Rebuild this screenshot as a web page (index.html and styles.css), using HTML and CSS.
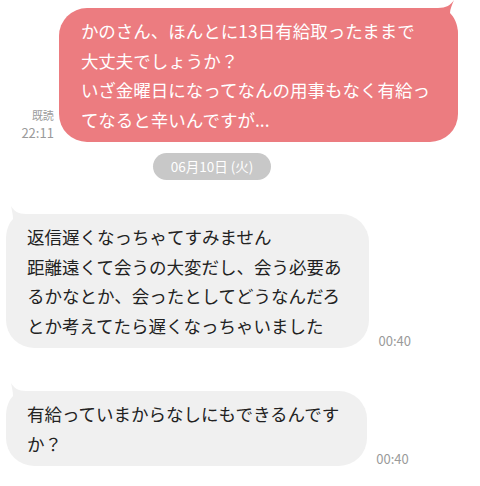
FILE: index.html
```html
<!DOCTYPE html>
<html lang="ja">
<head>
  <meta charset="UTF-8">
  <title>トーク</title>
  <meta name="viewport" content="width=device-width, initial-scale=1.0">
  <link rel="stylesheet" href="styles.css">
</head>
<body>

  <div class="talk">

    <div class="row sent">
      <div class="meta">
        <span>既読</span>
        <span>22:11</span>
      </div>
      <div class="bubble pink">
        <svg class="ear ear-right" width="30" height="40" viewBox="0 0 30 40">
          <path d="M0,8 L10,8 C18,8 23,5 26,0 C24,5 22,9 22,13 C26,17 30,24 30,34 L30,40 L0,40 Z" fill="#ec7c80"/>
        </svg>
        <p>かのさん、ほんとに13日有給取ったままで<br>大丈夫でしょうか？<br>いざ金曜日になってなんの用事もなく有給っ<br>てなると辛いんですが...</p>
      </div>
    </div>

    <div class="date">06月10日 (火)</div>

    <div class="row received first">
      <div class="bubble grey">
        <svg class="ear ear-left" width="30" height="40" viewBox="0 0 30 40">
          <path d="M30,8 L20,8 C12,8 8,5 5,0 C6,5 7,9 7,13 C3,17 0,24 0,34 L0,40 L30,40 Z" fill="#f0f0f0"/>
        </svg>
        <p>返信遅くなっちゃてすみません<br>距離遠くて会うの大変だし、会う必要あ<br>るかなとか、会ったとしてどうなんだろ<br>とか考えてたら遅くなっちゃいました</p>
      </div>
      <div class="meta"><span>00:40</span></div>
    </div>

    <div class="row received second">
      <div class="bubble grey">
        <svg class="ear ear-left" width="30" height="40" viewBox="0 0 30 40">
          <path d="M30,8 L20,8 C12,8 8,5 5,0 C6,5 7,9 7,13 C3,17 0,24 0,34 L0,40 L30,40 Z" fill="#f0f0f0"/>
        </svg>
        <p>有給っていまからなしにもできるんです<br>か？</p>
      </div>
      <div class="meta"><span>00:40</span></div>
    </div>

  </div>

</body>
</html>
```

FILE: styles.css
```css
body {
  margin: 0;
  background-color: #ffffff;
  font-family: "Noto Sans CJK JP", "Noto Sans", sans-serif;
  color: #222222;
}

.talk {
  display: flex;
  flex-direction: column;
  padding-top: 8px;
}

.row {
  display: flex;
  align-items: flex-end;
}

.sent {
  justify-content: flex-end;
  gap: 5px;
  padding-right: 22px;
}

.received {
  gap: 9px;
  padding-left: 6px;
}

.received.first {
  margin-top: 34px;
}

.received.second {
  margin-top: 43px;
}

.bubble {
  position: relative;
  border-radius: 28px;
}

.bubble p {
  position: relative;
  margin: 0;
  font-size: 17.5px;
  line-height: 29.5px;
  white-space: nowrap;
}

.pink {
  background-color: #ec7c80;
  color: #ffffff;
  padding: 8px 28px 8px 22px;
}

.grey {
  background-color: #f0f0f0;
  padding: 8px 28px 8px 21px;
}

.ear {
  position: absolute;
  top: -8px;
  display: block;
}

.ear-right {
  right: 0;
}

.ear-left {
  left: 0;
}

.meta {
  display: flex;
  flex-direction: column;
  align-items: flex-end;
  font-size: 13px;
  line-height: 17px;
  color: #9a9a9a;
  padding-bottom: 1px;
}

.meta span:first-child {
  font-size: 11px;
}

.received .meta {
  line-height: 14px;
  padding-bottom: 0;
}

.received .meta span:first-child {
  font-size: 13px;
}

.date {
  align-self: flex-start;
  margin: 11px 0 0 153px;
  width: 118px;
  height: 27px;
  line-height: 27px;
  border-radius: 14px;
  background-color: #c8c8c8;
  color: #ffffff;
  font-size: 13.5px;
  text-align: center;
}
```
